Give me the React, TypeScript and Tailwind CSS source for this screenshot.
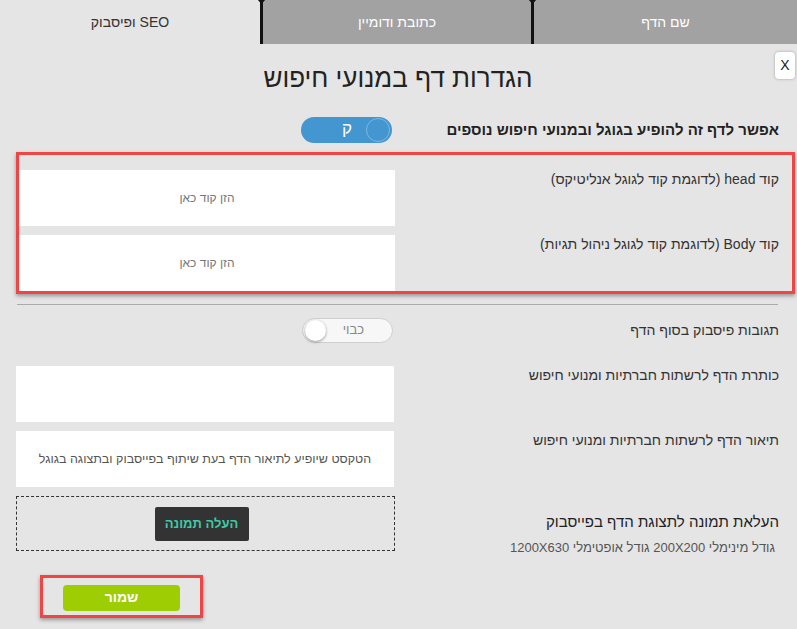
import React from "react"

function Divider() {
  return (
    <div className="relative w-[3px] bg-[#111] shrink-0">
      <div className="absolute -top-px left-[-3px] w-[9px] h-[5px] bg-[#111] [clip-path:polygon(0_0,100%_0,50%_100%)]" />
    </div>
  )
}

function ToggleOn() {
  return (
    <div className="relative w-[91px] h-[26px] rounded-full bg-[#4496d1] flex items-center">
      <div className="absolute right-[2px] top-[1px] w-[24px] h-[24px] rounded-full border border-[#7fb6e2]" />
      <span className="absolute right-[40px] top-[2px] text-white text-[17px] leading-[20px]">ק</span>
    </div>
  )
}

function ToggleOff() {
  return (
    <div className="relative w-[91px] h-[25px] rounded-full bg-[#f7f7f7] border border-[#cfcfcf]">
      <div className="absolute left-[2px] top-[1px] w-[21px] h-[21px] rounded-full bg-white shadow-[0_1px_3px_rgba(0,0,0,0.4)]" />
      <span className="absolute right-[28px] top-[3px] text-[#888] text-[13px] leading-[16px]">כבוי</span>
    </div>
  )
}

function Field({ label, placeholder }: { label: string; placeholder?: string }) {
  return (
    <div className="flex justify-between items-start">
      <div className="pt-[1px] text-[14px] leading-[16px] text-[#333]">{label}</div>
      <div className="w-[376px] h-[56px] bg-white flex items-center justify-center text-[12px] text-[#777]">
        {placeholder}
      </div>
    </div>
  )
}

export default function App() {
  return (
    <div dir="rtl" className="w-[797px] h-[629px] bg-[#e5e5e5] font-['Liberation_Sans',Arial,sans-serif] overflow-hidden">
      {/* Tabs */}
      <div className="flex h-[44px]">
        <div className="w-[263px] bg-[#a2a2a2] flex items-center justify-center text-white text-[14px]">שם הדף</div>
        <Divider />
        <div className="flex-1 bg-[#a2a2a2] flex items-center justify-center text-white text-[14px]">כתובת ודומיין</div>
        <Divider />
        <div className="w-[260px] flex items-center justify-center text-[#333] text-[14px]">SEO ופיסבוק</div>
      </div>

      <div className="relative pl-[17px] pr-[18px]">
        <button className="absolute left-[775px] top-[8px] w-[20px] h-[27px] bg-white rounded-[4px] shadow-[0_0_3px_rgba(0,0,0,0.3)] text-[14px] text-[#222] flex items-center justify-center">
          X
        </button>

        <h1 className="pt-[19px] text-center text-[26px] leading-[30px] text-[#222]">הגדרות דף במנועי חיפוש</h1>

        <div className="mt-[24px] flex justify-between items-center">
          <div className="text-[15px] font-bold text-[#222]">אפשר לדף זה להופיע בגוגל ובמנועי חיפוש נוספים</div>
          <div className="pl-[284px]">
            <ToggleOn />
          </div>
        </div>

        {/* Code fields */}
        <div className="mt-[9px] ml-[-1px] mr-[-16px] border-[3px] border-[#f14545] shadow-[0_2px_4px_rgba(0,0,0,0.35)] pt-[15px] pr-[13px] flex flex-col gap-[9px]">
          <Field label="קוד head (לדוגמת קוד לגוגל אנליטיקס)" placeholder="הזן קוד כאן" />
          <Field label="קוד Body (לדוגמת קוד לגוגל ניהול תגיות)" placeholder="הזן קוד כאן" />
        </div>

        <div className="mt-[10px] border-t border-[#aaa] mr-[1px]" />

        <div className="mt-[13px] flex justify-between items-center">
          <div className="text-[14px] text-[#333]">תגובות פיסבוק בסוף הדף</div>
          <div className="pl-[285px]">
            <ToggleOff />
          </div>
        </div>

        <div className="mt-[23px] flex flex-col gap-[9px] -ml-px">
          <div className="flex justify-between items-start">
            <div className="pt-[1px] text-[14px] leading-[16px] text-[#333]">כותרת הדף לרשתות חברתיות ומנועי חיפוש</div>
            <div className="w-[378px] h-[56px] bg-white" />
          </div>
          <div className="flex justify-between items-start">
            <div className="pt-[1px] text-[14px] leading-[16px] text-[#333]">תיאור הדף לרשתות חברתיות ומנועי חיפוש</div>
            <div className="w-[378px] h-[56px] bg-white flex items-center justify-center pt-[1px] text-[12.5px] text-[#555]">
              הטקסט שיופיע לתיאור הדף בעת שיתוף בפייסבוק ובתצוגה בגוגל
            </div>
          </div>
        </div>

        {/* Image upload */}
        <div className="mt-[9px] flex justify-between items-start -ml-px">
          <div className="pt-[17px]">
            <div className="text-[15px] leading-[18px] text-[#222]">העלאת תמונה לתצוגת הדף בפייסבוק</div>
            <div className="mt-[9px] mr-[4px] text-[13px] leading-[16px] text-[#555]">גודל מינימלי 200X200 גודל אופטימלי 1200X630</div>
          </div>
          <div className="w-[379px] h-[55px] border border-dashed border-[#333] flex items-center justify-center">
            <button className="w-[94px] h-[34px] bg-[#333] rounded-[2px] text-[#3fcaa8] font-bold text-[13px] mr-[8px]">
              העלה תמונה
            </button>
          </div>
        </div>

        {/* Save */}
        <div className="mt-[19px] flex justify-end pl-[23px]">
          <div className="w-[163px] h-[43px] border-[3px] border-[#f14545] shadow-[0_2px_4px_rgba(0,0,0,0.35)] flex items-center justify-center pt-[2px]">
            <button className="w-[117px] h-[26px] rounded-[4px] bg-[#9dcd02] text-white font-bold text-[14px]">שמור</button>
          </div>
        </div>
      </div>
    </div>
  )
}
